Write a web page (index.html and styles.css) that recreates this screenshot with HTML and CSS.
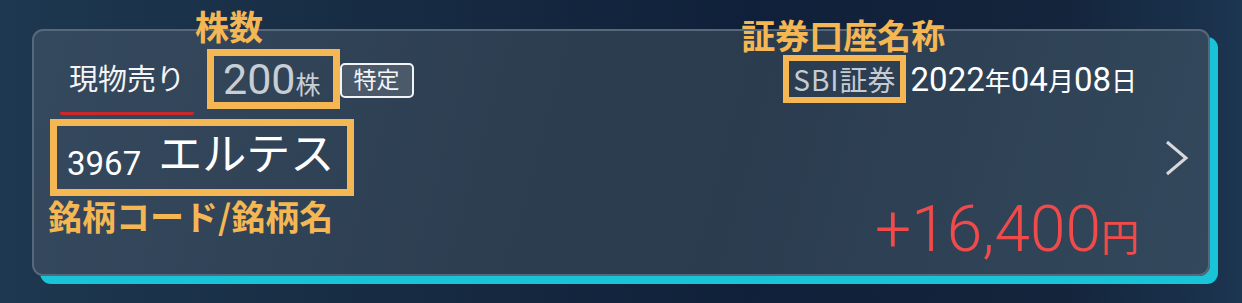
FILE: index.html
```html
<!DOCTYPE html>
<html lang="ja">
<head>
  <meta charset="UTF-8" />
  <meta name="viewport" content="width=device-width, initial-scale=1.0"/>
  <title>保有銘柄</title>
  <link rel="stylesheet" href="styles.css">
</head>
<body>

  <div class="page">
    <div class="card">

      <div class="row-top">
        <div class="left">
          <span class="tab">現物売り</span>
          <span class="mark qty">
            <span class="num">200</span><span class="unit">株</span>
            <span class="note note-qty">株数</span>
          </span>
          <span class="badge">特定</span>
        </div>
        <div class="right">
          <span class="mark broker">
            <span class="latin">SBI</span>証券
            <span class="note note-broker">証券口座名称</span>
          </span>
          <span class="date">2022<span class="jp">年</span>04<span class="jp">月</span>08<span class="jp">日</span></span>
        </div>
      </div>

      <div class="row-mid">
        <span class="mark stock">
          <span class="code">3967</span><span class="name">エルテス</span>
          <span class="note note-stock">銘柄コード/銘柄名</span>
        </span>
        <svg class="chevron" width="24" height="36" viewBox="0 0 24 36">
          <polyline points="2,2 21,18 2,34" fill="none" stroke="#d8d9db" stroke-width="3" />
        </svg>
      </div>

      <div class="row-bottom">
        <span class="pl">+16,400<span class="yen">円</span></span>
      </div>

    </div>
  </div>

</body>
</html>
```

FILE: styles.css
```css
* {
  box-sizing: border-box;
}

body {
  margin: 0;
  width: 1242px;
  height: 303px;
  overflow: hidden;
  font-family: Roboto, "Noto Sans CJK JP", sans-serif;
  color: #fff;
  background: linear-gradient(90deg, #1d3850 0%, #162a41 35%, #10203a 60%, #13243b 85%, #1c3550 100%);
}

.page {
  padding: 29px 0 0 32px;
}

.card {
  position: relative;
  width: 1178px;
  height: 247px;
  padding-top: 18px;
  border: 2px solid #57687a;
  border-radius: 11px;
  background: linear-gradient(105deg, #35495e 0%, #2d3e51 40%, #2b3c4f 60%, #33485c 100%);
  box-shadow: 8px 8px 0 #1ac4d8;
}

.row-top {
  display: flex;
  justify-content: space-between;
  align-items: flex-start;
  height: 60px;
}

.left {
  display: flex;
  align-items: flex-start;
  padding-left: 26px;
}

.tab {
  margin-top: 13px;
  padding: 0 9px 14px;
  font-size: 29px;
  line-height: 36px;
  color: #f4f5f7;
  border-bottom: 3px solid #c9292b;
  border-radius: 2px;
}

.mark {
  position: relative;
  border: 7px solid #f4b753;
}

.qty {
  margin-left: 13px;
  height: 60px;
  padding: 0 12px 0 9px;
  font-size: 43px;
  line-height: 46px;
  color: #c9ced4;
  white-space: nowrap;
}

.qty .unit {
  font-size: 25px;
  line-height: 1;
}

.badge {
  margin-top: 14px;
  height: 35px;
  padding: 0 12px;
  border: 2px solid #f2f4f6;
  border-radius: 5px;
  background: #4a5a6b;
  font-size: 23px;
  line-height: 31px;
  color: #f2f4f6;
}

.right {
  display: flex;
  align-items: flex-start;
  padding-right: 71px;
}

.broker {
  margin-top: 6px;
  height: 48px;
  border-width: 6px;
  padding: 0 4px;
  font-family: "Noto Sans CJK JP", sans-serif;
  font-size: 28px;
  line-height: 36px;
  color: #c6cbd2;
  white-space: nowrap;
}

.broker .latin {
  letter-spacing: 1px;
}

.date {
  margin-left: 5px;
  margin-top: 13px;
  font-size: 33px;
  line-height: 36px;
  color: #fff;
  white-space: nowrap;
}

.date .jp {
  font-size: 26px;
  line-height: 1;
}

.row-mid {
  display: flex;
  justify-content: space-between;
  align-items: center;
  height: 77px;
  margin-top: 10px;
}

.stock {
  display: block;
  margin-left: 16px;
  height: 77px;
  padding: 7px 13px 0 10px;
  line-height: 52px;
  white-space: nowrap;
}

.stock .code {
  font-size: 33px;
  vertical-align: -5px;
}

.stock .name {
  margin-left: 17px;
  font-size: 44px;
  line-height: 1;
}

.chevron {
  margin-right: 19px;
}

.row-bottom {
  display: flex;
  justify-content: flex-end;
  margin-top: 2px;
  padding-right: 69px;
}

.pl {
  font-size: 64px;
  font-weight: 300;
  line-height: 64px;
  color: #f04a4a;
  white-space: nowrap;
}

.pl .yen {
  font-size: 38px;
  font-weight: 400;
  line-height: 1;
}

.note {
  position: absolute;
  font-family: "Noto Sans CJK JP", sans-serif;
  font-size: 34px;
  font-weight: 700;
  line-height: 1;
  color: #f4b753;
  white-space: nowrap;
}

.note-qty {
  left: -19px;
  top: -47px;
}

.note-broker {
  left: -48px;
  top: -43px;
}

.note-stock {
  left: -9px;
  top: 73px;
}
```
